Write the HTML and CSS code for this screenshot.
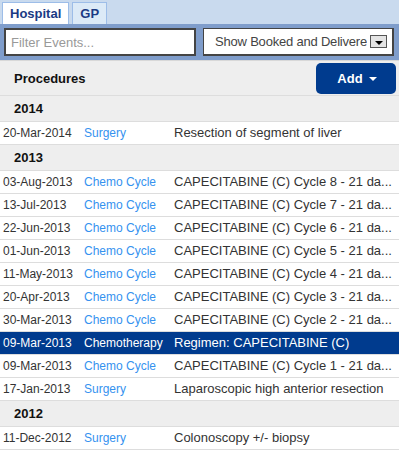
FILE: index.html
```html
<!DOCTYPE html>
<html lang="en">
    <head>
        <meta charset="UTF-8" />
        <meta name="viewport" content="width=device-width, initial-scale=1.0" />
        <title>Events</title>
        <link rel="stylesheet" href="styles.css">
    </head>
    <body>
        <div class="tabs">
            <div class="tab active">Hospital</div>
            <div class="tab">GP</div>
        </div>

        <div class="filters">
            <input class="filter-input" type="text" placeholder="Filter Events..." />
            <div class="select">
                <span class="select-text">Show Booked and Delivere</span>
                <span class="select-btn"><span class="arrow"></span></span>
            </div>
        </div>

        <div class="panel-head">
            <span class="panel-title">Procedures</span>
            <button class="add-btn">Add <span class="caret"></span></button>
        </div>

        <div class="events">
            <div class="year">2014</div>
            <div class="row">
                <span class="date">20-Mar-2014</span><span class="type">Surgery</span><span class="desc">Resection of segment of liver</span>
            </div>

            <div class="year">2013</div>
            <div class="row">
                <span class="date">03-Aug-2013</span><span class="type">Chemo Cycle</span><span class="desc">CAPECITABINE (C) Cycle 8 - 21 da...</span>
            </div>
            <div class="row">
                <span class="date">13-Jul-2013</span><span class="type">Chemo Cycle</span><span class="desc">CAPECITABINE (C) Cycle 7 - 21 da...</span>
            </div>
            <div class="row">
                <span class="date">22-Jun-2013</span><span class="type">Chemo Cycle</span><span class="desc">CAPECITABINE (C) Cycle 6 - 21 da...</span>
            </div>
            <div class="row">
                <span class="date">01-Jun-2013</span><span class="type">Chemo Cycle</span><span class="desc">CAPECITABINE (C) Cycle 5 - 21 da...</span>
            </div>
            <div class="row">
                <span class="date">11-May-2013</span><span class="type">Chemo Cycle</span><span class="desc">CAPECITABINE (C) Cycle 4 - 21 da...</span>
            </div>
            <div class="row">
                <span class="date">20-Apr-2013</span><span class="type">Chemo Cycle</span><span class="desc">CAPECITABINE (C) Cycle 3 - 21 da...</span>
            </div>
            <div class="row">
                <span class="date">30-Mar-2013</span><span class="type">Chemo Cycle</span><span class="desc">CAPECITABINE (C) Cycle 2 - 21 da...</span>
            </div>
            <div class="row selected">
                <span class="date">09-Mar-2013</span><span class="type">Chemotherapy</span><span class="desc">Regimen: CAPECITABINE (C)</span>
            </div>
            <div class="row">
                <span class="date">09-Mar-2013</span><span class="type">Chemo Cycle</span><span class="desc">CAPECITABINE (C) Cycle 1 - 21 da...</span>
            </div>
            <div class="row">
                <span class="date">17-Jan-2013</span><span class="type">Surgery</span><span class="desc">Laparoscopic high anterior resection</span>
            </div>

            <div class="year">2012</div>
            <div class="row">
                <span class="date">11-Dec-2012</span><span class="type">Surgery</span><span class="desc">Colonoscopy +/- biopsy</span>
            </div>
        </div>
    </body>
</html>
```

FILE: styles.css
```css
body {
    margin: 0;
    font-family: "Liberation Sans", Arial, sans-serif;
    color: #333;
    background: #fff;
}
.tabs {
    display: flex;
    gap: 3px;
    height: 22px;
    padding: 2px 2px 0;
    background: #c9daee;
}
.tab {
    padding: 0 7px;
    border: 1px solid #9dbde8;
    border-bottom: none;
    background: #dceaf7;
    color: #1b3a84;
    font-size: 13px;
    font-weight: bold;
    line-height: 21px;
}
.tab.active {
    background: #fff;
}
.filters {
    display: flex;
    gap: 7px;
    height: 28px;
    padding: 4px 5px 4px 4px;
    background: #7f9dcb;
}
.filter-input {
    box-sizing: border-box;
    width: 192px;
    height: 28px;
    margin: 0;
    padding: 0 5px;
    border: 2px solid #444;
    font-family: "Liberation Sans", Arial, sans-serif;
    font-size: 13px;
    outline: none;
}
.filter-input::placeholder {
    color: #999;
}
.select {
    box-sizing: border-box;
    flex: 1;
    min-width: 0;
    display: flex;
    align-items: center;
    height: 28px;
    padding: 0 5px 0 11px;
    border: 2px solid #444;
    border-width: 1px 2px 2px 1px;
    background: #fff;
    font-size: 13px;
    color: #444;
}
.select-text {
    flex: 1;
    min-width: 0;
    overflow: hidden;
    white-space: nowrap;
    letter-spacing: -0.2px;
}
.select-btn {
    box-sizing: border-box;
    flex: none;
    display: flex;
    justify-content: center;
    align-items: flex-end;
    width: 17px;
    height: 13px;
    margin-left: 3px;
    padding-bottom: 2px;
    border: 1px solid #555;
    background: #e4e4e4;
}
.arrow {
    width: 0;
    height: 0;
    border-left: 4px solid transparent;
    border-right: 4px solid transparent;
    border-top: 4px solid #000;
}
.panel-head {
    box-sizing: border-box;
    display: flex;
    justify-content: space-between;
    align-items: flex-start;
    height: 36px;
    padding: 2px 3px 0 14px;
    border-top: 1px solid #d8d8d8;
    border-bottom: 1px solid #ddd;
    background: #eee;
}
.panel-title {
    margin-top: 8px;
    font-size: 13px;
    font-weight: bold;
    color: #111;
}
.add-btn {
    display: flex;
    align-items: center;
    justify-content: center;
    gap: 6px;
    width: 80px;
    height: 31px;
    padding: 0 0 0 2px;
    border: none;
    border-radius: 5px;
    background: #003b8e;
    color: #fff;
    font-family: "Liberation Sans", Arial, sans-serif;
    font-size: 13px;
    font-weight: bold;
}
.caret {
    width: 0;
    height: 0;
    border-left: 4px solid transparent;
    border-right: 4px solid transparent;
    border-top: 4px solid #fff;
}
.year {
    height: 25px;
    padding-left: 14px;
    border-bottom: 1px solid #ddd;
    background: #eee;
    font-size: 13px;
    font-weight: bold;
    line-height: 25px;
    color: #111;
}
.row {
    display: grid;
    grid-template-columns: 81px 90px minmax(0, 1fr);
    height: 22px;
    padding: 0 3px;
    border-bottom: 1px solid #ddd;
    font-size: 12px;
    line-height: 22px;
    white-space: nowrap;
}
.type {
    color: #3592ef;
}
.desc {
    overflow: hidden;
    font-size: 13px;
}
.row.selected {
    background: #003b8e;
    color: #fff;
}
.row.selected .type {
    color: #fff;
}
```
